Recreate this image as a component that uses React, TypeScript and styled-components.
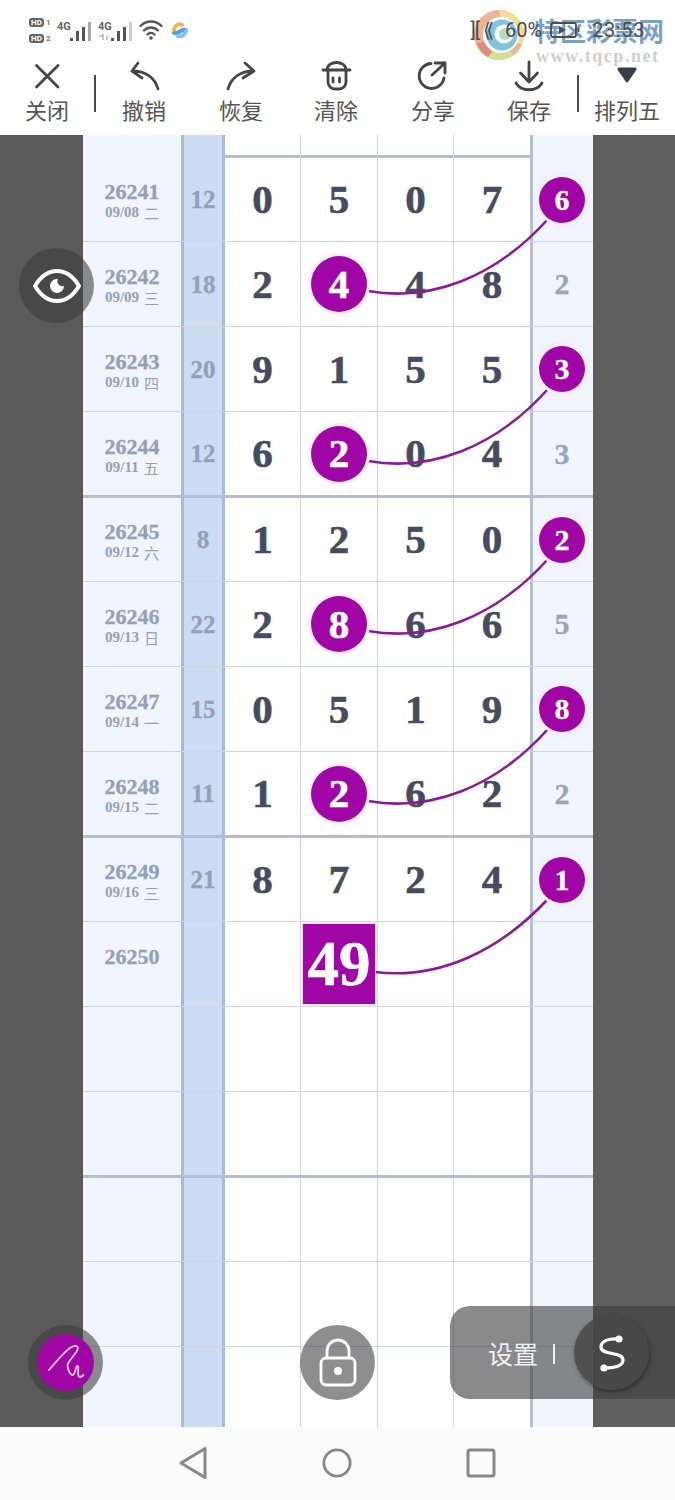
import React from "react";
import styled, { createGlobalStyle } from "styled-components";

const Global = createGlobalStyle`
  html, body { margin: 0; padding: 0; background: #fff; }
  #root { width: 675px; height: 1500px; overflow: hidden; }
  * { box-sizing: border-box; }
`;

const CJK = `"Noto Sans CJK SC", "Noto Sans", sans-serif`;
const SERIF = `"Liberation Serif", "Noto Sans CJK SC", serif`;

const Page = styled.div`
  width: 675px; height: 1500px; display: flex; flex-direction: column;
  position: relative; background: #fff; overflow: hidden;
`;

/* status bar */
const StatusBar = styled.div`
  height: 56px; display: flex; align-items: center; justify-content: space-between;
  padding: 4px 30px 0 29px; color: #555; font-family: "Roboto", sans-serif;
`;
const StatusGroup = styled.div`display: flex; align-items: center;`;
const HdStack = styled.div`display: flex; flex-direction: column; gap: 7px; margin-right: 7px;`;
const HdRow = styled.div`display: flex; align-items: center; gap: 2px; font-size: 8px; font-weight: 700; line-height: 9px; color: #777; width: 21px;`;
const HdPill = styled.span`
  width: 15px; height: 9px; border-radius: 3px; background: #666; color: #fff;
  font-size: 8px; line-height: 9px; text-align: center; font-weight: 700; flex: none;
`;
const SignalWrap = styled.div`position: relative; width: 34px; height: 24px; margin-right: 7px;`;
const SignalLabel = styled.span`
  position: absolute; left: 0; top: 3px; font-size: 11px; line-height: 11px; font-weight: 700; color: #666;
`;
const RightStatus = styled.div`
  position: relative; z-index: 3; display: flex; align-items: center; font-size: 20px; color: #4c4c4a; gap: 12px;
`;
const StatusGlyphs = styled.span`letter-spacing: -1px;`;
const StatusPercent = styled.span`margin-right: -4px;`;
const StatusTime = styled.span`letter-spacing: 0.6px;`;

/* watermark */
const Watermark = styled.div`position: absolute; left: 474px; top: 10px; width: 195px; height: 52px; pointer-events: none;`;
const WatermarkTitle = styled.div`
  position: absolute; left: 60px; top: 5px; font-family: ${CJK}; font-weight: 700; font-size: 26px; line-height: 30px;
  color: rgba(88, 140, 190, 0.82); white-space: nowrap;
`;
const WatermarkUrl = styled.div`
  position: absolute; left: 62px; top: 36px; font-family: ${SERIF}; font-size: 18px; line-height: 20px; font-weight: 700;
  letter-spacing: 1.55px; color: rgba(190, 190, 190, 0.75); white-space: nowrap;
`;

/* toolbar */
const Toolbar = styled.div`
  height: 79px; display: grid; grid-template-columns: 94px 4px 92px 102px 88px 106px 86px 12px 86px;
  padding-top: 4px; background: #fff; flex: none;
`;
const ToolItem = styled.div`display: flex; flex-direction: column; align-items: center;`;
const ToolLabel = styled.div`
  font-family: ${CJK}; font-size: 22px; line-height: 34px; color: #555; white-space: nowrap;
`;
const ToolSep = styled.div<{ $justify?: string }>`
  display: flex; justify-content: ${p => p.$justify || "flex-start"}; padding-top: 15px;
  &::before { content: ""; display: block; width: 2px; height: 37px; background: #4a4a4a; }
`;

/* main */
const Main = styled.div`position: relative; flex: 1; display: flex; overflow: hidden; min-height: 0;`;
const Side = styled.div<{ $w: number; $c: string }>`width: ${p => p.$w}px; background: ${p => p.$c}; flex: none;`;
const Sheet = styled.div`width: 510px; flex: none; position: relative; background: #fff;`;
const Row = styled.div<{ $h: number; $thick?: boolean }>`
  display: grid; grid-template-columns: 98px 44px 76px 77px 76px 76px 63px;
  height: ${p => p.$h}px;
  border-bottom: ${p => (p.$thick ? "3px solid #b1bed3" : "1.5px solid #d0d6e0")};
`;
const Cell = styled.div<{ $line?: boolean }>`
  display: flex; align-items: center; justify-content: center; position: relative;
  font-family: ${SERIF}; font-weight: 700; font-size: 41px; color: #454c5f; line-height: 1;
  -webkit-text-stroke: 0.6px currentColor;
  ${p => (p.$line ? "border-right: 1.5px solid #d0d6e0;" : "")}
`;
const DateCell = styled.div<{ $top?: number }>`
  background: #f0f5fe; display: flex; flex-direction: column; align-items: center; padding-top: ${p => p.$top ?? 24}px;
  font-family: ${SERIF}; font-weight: 700; color: #94a1b6;
`;
const Issue = styled.div`font-size: 22px; line-height: 22px; -webkit-text-stroke: 0.3px currentColor;`;
const DateLine = styled.div`font-size: 15px; line-height: 19px; white-space: nowrap; display: flex; gap: 5px; align-items: center;`;
const Weekday = styled.span`font-family: ${CJK}; font-size: 15px; font-weight: 400;`;
const SumCell = styled.div`
  background: #cbdcf3; border-left: 3px solid #a9bcd2; border-right: 3px solid #a9bcd2;
  display: flex; align-items: center; justify-content: center;
  font-family: ${SERIF}; font-weight: 700; font-size: 25px; color: #94a1b6; line-height: 1;
  -webkit-text-stroke: 0.3px currentColor;
`;
const LastCell = styled.div`
  background: #f0f5fe; border-left: 3px solid #b1bed3; display: flex; align-items: center; justify-content: center;
  font-family: ${SERIF}; font-weight: 700; font-size: 30px; color: #99a5b8; line-height: 1; padding-right: 2px;
  -webkit-text-stroke: 0.3px currentColor;
`;
const Badge = styled.div<{ $size: number; $font: number }>`
  width: ${p => p.$size}px; height: ${p => p.$size}px; border-radius: 50%; background: #a006a5;
  box-shadow: 0 0 0 3px #faf0fa, 0 0 3px 3px rgba(160, 6, 165, .08);
  color: #fff; display: flex; align-items: center; justify-content: center;
  font-size: ${p => p.$font}px; line-height: 1; position: relative; z-index: 2;
`;
const BigBox = styled.div`
  width: 72px; height: 80px; background: #a006a5; box-shadow: 0 0 0 1px #f4d9f5; color: #fff;
  display: flex; align-items: center; justify-content: center; font-size: 63px; line-height: 1;
  position: relative; z-index: 2;
`;
const Curves = styled.svg`position: absolute; left: 0; top: 0; width: 510px; height: 1292px; z-index: 1; pointer-events: none;`;

/* floating controls */
const RoundButton = styled.div<{ $x: number; $y: number }>`
  position: absolute; left: ${p => p.$x}px; top: ${p => p.$y}px; width: 75px; height: 75px; border-radius: 50%;
  background: rgba(60, 60, 60, .58); display: flex; align-items: center; justify-content: center; z-index: 5;
`;
const PenDot = styled.div`
  width: 57px; height: 57px; border-radius: 50%; background: #a006a5; display: flex; align-items: center; justify-content: center;
`;
const SettingsPill = styled.div`
  position: absolute; left: 450px; top: 1171px; width: 225px; height: 93px; border-radius: 20px 0 0 20px;
  background: rgba(60, 60, 60, .6); display: flex; align-items: center; padding-left: 38px; gap: 15px; z-index: 5;
  font-family: ${CJK}; font-size: 25px; color: #f2f2f2;
`;
const SettingsSep = styled.span`width: 2px; height: 20px; background: #eee; margin-top: 2px;`;
const SButton = styled.div`
  position: absolute; left: 124px; top: 9px; width: 75px; height: 75px; border-radius: 50%;
  background: rgba(70, 70, 70, .85); box-shadow: 1px 2px 4px rgba(0, 0, 0, .35);
  display: flex; align-items: center; justify-content: center;
`;

/* nav */
const NavBar = styled.div`
  height: 73px; flex: none; background: #fbfbfb; display: grid; grid-template-columns: 178px 30px 114px 30px 114px 30px;
  align-items: center;
`;
const NavSlot = styled.div`grid-column: ${(p: { $col: number }) => p.$col}; display: flex; justify-content: center; margin-top: -1px;`;

const Stroke = ({ size = 32, w = 2.8, c = "#454545", children }: { size?: number; w?: number; c?: string; children: React.ReactNode }) => (
  <svg width={size} height={size} viewBox={`0 0 ${size} ${size}`} fill="none" stroke={c} strokeWidth={w} strokeLinecap="round" strokeLinejoin="round">{children}</svg>
);

const tools: { label: string; icon: React.ReactNode }[] = [
  { label: "关闭", icon: <Stroke><path d="M5.5 5.5 27 27M27 5.5 5.5 27" /></Stroke> },
  { label: "撤销", icon: <Stroke><path d="M10 3 4 11l10 7M4 11c14 0 23 7 26 18" /></Stroke> },
  { label: "恢复", icon: <Stroke><path d="M20 3l9 8-11 7M29 11C15 11 6 18 3 29" /></Stroke> },
  { label: "清除", icon: <Stroke><path d="M3 10h27M7 10C7 0 26 0 26 10M8 10v12a7 7 0 0 0 7 7h4a7 7 0 0 0 7-7V10" /><path d="M13 18v4M19.5 18v4" /></Stroke> },
  { label: "分享", icon: <Stroke><path d="M14 3.5A12.5 12.5 0 1 0 27 18" /><path d="M15 15 28 3M18 3h10v10" /></Stroke> },
  { label: "保存", icon: <Stroke><path d="M16 2v20M7.5 13l8.5 9 8.5-9M3 23c5 9 21 9 26 0" /></Stroke> },
];

const Signal = ({ dim }: { dim?: boolean }) => (
  <SignalWrap>
    <SignalLabel>4G</SignalLabel>
    <svg width="34" height="24" viewBox="0 0 34 24" style={{ display: "block" }}>
      {dim && <path d="M1 18h4M5 16v6M9 18v4" stroke="#b4b4b4" strokeWidth="1.5" fill="none" />}
      <rect x="13" y="20" width="3" height="3" fill="#555" />
      <rect x="19" y="13" width="3" height="10" fill="#555" />
      <rect x="25" y="9" width="3" height="14" fill="#555" />
      <rect x="31" y="4" width="3" height="19" fill={dim ? "#cfcfcf" : "#a8a8a8"} />
    </svg>
  </SignalWrap>
);

const rows = [
  { id: "26241", date: "09/08", wd: "二", sum: 12, d: ["0", "5", "0", "7"], last: "6", lastB: true, afterThick: true },
  { id: "26242", date: "09/09", wd: "三", sum: 18, d: ["2", "4", "4", "8"], hit: 1, last: "2" },
  { id: "26243", date: "09/10", wd: "四", sum: 20, d: ["9", "1", "5", "5"], last: "3", lastB: true },
  { id: "26244", date: "09/11", wd: "五", sum: 12, d: ["6", "2", "0", "4"], hit: 1, last: "3", thick: true },
  { id: "26245", date: "09/12", wd: "六", sum: 8, d: ["1", "2", "5", "0"], last: "2", lastB: true, afterThick: true },
  { id: "26246", date: "09/13", wd: "日", sum: 22, d: ["2", "8", "6", "6"], hit: 1, last: "5" },
  { id: "26247", date: "09/14", wd: "一", sum: 15, d: ["0", "5", "1", "9"], last: "8", lastB: true },
  { id: "26248", date: "09/15", wd: "二", sum: 11, d: ["1", "2", "6", "2"], hit: 1, last: "2", thick: true },
  { id: "26249", date: "09/16", wd: "三", sum: 21, d: ["8", "7", "2", "4"], last: "1", lastB: true, afterThick: true },
];

const curveOffsets = [0, 170, 340, 510];

const EmptyRow = ({ h, thick, id, box }: { h: number; thick?: boolean; id?: string; box?: boolean }) => (
  <Row $h={h} $thick={thick}>
    <DateCell>{id && <Issue>{id}</Issue>}</DateCell>
    <SumCell />
    <Cell $line />
    <Cell $line>{box && <BigBox>49</BigBox>}</Cell>
    <Cell $line />
    <Cell />
    <LastCell />
  </Row>
);

export default function App() {
  return (
    <Page>
      <Global />
      <StatusBar>
        <StatusGroup>
          <HdStack>
            <HdRow><HdPill>HD</HdPill>1</HdRow>
            <HdRow><HdPill>HD</HdPill>2</HdRow>
          </HdStack>
          <Signal />
          <Signal dim />
          <svg width="26" height="22" viewBox="0 0 26 22" fill="none" stroke="#555" strokeWidth="2.4" strokeLinecap="round" style={{ marginRight: 6 }}>
            <path d="M1.5 7c6-6 15-6 21 0M5 11.5c4-4 10-4 14 0M8.5 15.5c2-2 5-2 7 0" />
            <circle cx="12" cy="19" r="1.8" fill="#555" stroke="none" />
          </svg>
          <svg width="18" height="18" viewBox="0 0 18 18" fill="none" strokeWidth="4" strokeLinecap="round">
            <path d="M3 9c1-5 5-7 8-5" stroke="#f0b64a" />
            <path d="M3 12c4 2 7-5 12-3" stroke="#4d9fd8" />
            <path d="M15 10c-1 4-5 6-8 5" stroke="#7ec4ee" />
          </svg>
        </StatusGroup>
        <RightStatus>
          <StatusGlyphs>{"][ ⟪"}</StatusGlyphs>
          <StatusPercent>60%</StatusPercent>
          <svg width="30" height="16" viewBox="0 0 30 16" fill="none" stroke="#4c4c4a" strokeWidth="1.8"><rect x="1" y="1" width="25" height="14" rx="2" /><path d="M9 4l7 4-7 4zM16 4v8" fill="#4c4c4a" stroke="none" /><path d="M28.5 6v4" /></svg>
          <StatusTime>23:53</StatusTime>
        </RightStatus>
      </StatusBar>
      <Watermark>
        <svg width="50" height="50" viewBox="0 0 50 50" fill="none" style={{ opacity: 0.85 }}>
          <circle cx="25" cy="25" r="25" fill="#e9a884" />
          <path d="M25 0a25 25 0 0 1 23 35L30 25z" fill="#f3d68c" />
          <path d="M10 45a25 25 0 0 0 30 0L28 30z" fill="#c9dc78" />
          <path d="M3 33A25 25 0 0 0 14 47l14-18z" fill="#d67a66" />
          <circle cx="27" cy="25" r="18" fill="#fff" />
          <circle cx="28" cy="25" r="15.5" fill="#6cbcd8" />
          <circle cx="30" cy="24" r="9.5" fill="#fff" />
          <circle cx="31" cy="24" r="6" fill="#a9d6b4" />
        </svg>
        <WatermarkTitle>特区彩票网</WatermarkTitle>
        <WatermarkUrl>www.tqcp.net</WatermarkUrl>
      </Watermark>
      <Toolbar>
        <ToolItem>{tools[0].icon}<ToolLabel>{tools[0].label}</ToolLabel></ToolItem>
        <ToolSep />
        {tools.slice(1).map(t => (
          <ToolItem key={t.label}>{t.icon}<ToolLabel>{t.label}</ToolLabel></ToolItem>
        ))}
        <ToolSep $justify="center" />
        <ToolItem>
          <svg width="32" height="32" viewBox="0 0 32 32"><path d="M8 7.5h16a1.6 1.6 0 0 1 1.3 2.5l-8 11.6a1.6 1.6 0 0 1-2.6 0L6.7 10A1.6 1.6 0 0 1 8 7.5z" fill="#3d3d49" /></svg>
          <ToolLabel>排列五</ToolLabel>
        </ToolItem>
      </Toolbar>
      <Main>
        <Side $w={83} $c="#5a5a5a" />
        <Sheet>
          <EmptyRow h={23} thick />
          {rows.map(r => (
            <Row key={r.id} $h={r.thick ? 86 : r.afterThick ? 84 : 85} $thick={r.thick}>
              <DateCell $top={r.afterThick ? 23 : 24}>
                <Issue>{r.id}</Issue>
                <DateLine>{r.date}<Weekday>{r.wd}</Weekday></DateLine>
              </DateCell>
              <SumCell>{r.sum}</SumCell>
              {r.d.map((v, i) => (
                <Cell key={i} $line={i < 3}>
                  {r.hit === i ? <Badge $size={56} $font={41}>{v}</Badge> : v}
                </Cell>
              ))}
              <LastCell>
                {r.lastB ? <Badge $size={46} $font={30}>{r.last}</Badge> : r.last}
              </LastCell>
            </Row>
          ))}
          <EmptyRow h={85} id="26250" box />
          <EmptyRow h={85} />
          <EmptyRow h={86} thick />
          <EmptyRow h={84} />
          <EmptyRow h={85} />
          <EmptyRow h={85} />
          <Curves viewBox="0 0 510 1292" fill="none" stroke="#8c1a96" strokeWidth="2.6" strokeLinecap="round">
            {curveOffsets.map(o => (
              <path key={o} d="M285 156C347 167 412 143 465 84" transform={`translate(0 ${o})`} />
            ))}
            <path d="M292 837C357 845 417 815 464 765" />
          </Curves>
        </Sheet>
        <Side $w={82} $c="#5f5f5f" />
        <RoundButton $x={19} $y={113}>
          <svg width="50" height="36" viewBox="0 0 50 36" fill="none">
            <path d="M3 18C9 8 16 3 25 3s16 5 22 15c-6 10-13 15-22 15S9 28 3 18z" stroke="#fff" strokeWidth="4" strokeLinejoin="round" />
            <path d="M26 11a7 7 0 1 0 6 7 5 5 0 0 1-6-7z" fill="#fff" />
          </svg>
        </RoundButton>
        <RoundButton $x={28} $y={1190}>
          <PenDot>
            <svg width="57" height="57" viewBox="0 0 57 57" fill="none" stroke="#f5c9f2" strokeWidth="1.8" strokeLinecap="round" strokeLinejoin="round">
              <path d="M12 36C20 27 32 11 39 12c7 2-8 14-8.5 19 0 5 3 10 5 10 3 0 3-9 5-9 2 0-1 10 2 11 1 0 3-1 4-2" />
            </svg>
          </PenDot>
        </RoundButton>
        <RoundButton $x={300} $y={1190}>
          <svg width="38" height="50" viewBox="0 0 38 50" fill="none" stroke="#fff" strokeWidth="2.8">
            <path d="M8 21v-8a11 11 0 0 1 22 0v8" />
            <rect x="2" y="20" width="34" height="27" rx="5" />
            <circle cx="19" cy="33" r="4" fill="#fff" stroke="none" />
          </svg>
        </RoundButton>
        <SettingsPill>
          设置
          <SettingsSep />
          <SButton>
            <svg width="36" height="44" viewBox="0 0 36 44" fill="none" stroke="#fff" strokeWidth="3.2" strokeLinecap="round">
              <path d="M25 8C15 7 7 10 7 16c0 9 22 4 22 13 0 6-9 8-19 8" />
              <circle cx="25" cy="8" r="3.6" fill="#fff" stroke="none" />
              <circle cx="10" cy="37" r="3.6" fill="#fff" stroke="none" />
            </svg>
          </SButton>
        </SettingsPill>
      </Main>
      <NavBar>
        <NavSlot $col={2}>
          <svg width="30" height="34" viewBox="0 0 30 34" fill="none" stroke="#888" strokeWidth="3" strokeLinejoin="round"><path d="M27 2.5v29L3 17z" /></svg>
        </NavSlot>
        <NavSlot $col={4}>
          <svg width="32" height="32" viewBox="0 0 32 32" fill="none" stroke="#888" strokeWidth="3"><circle cx="16" cy="16" r="14" /></svg>
        </NavSlot>
        <NavSlot $col={6}>
          <svg width="30" height="30" viewBox="0 0 30 30" fill="none" stroke="#888" strokeWidth="3"><rect x="2" y="2" width="26" height="26" rx="2" /></svg>
        </NavSlot>
      </NavBar>
    </Page>
  );
}
